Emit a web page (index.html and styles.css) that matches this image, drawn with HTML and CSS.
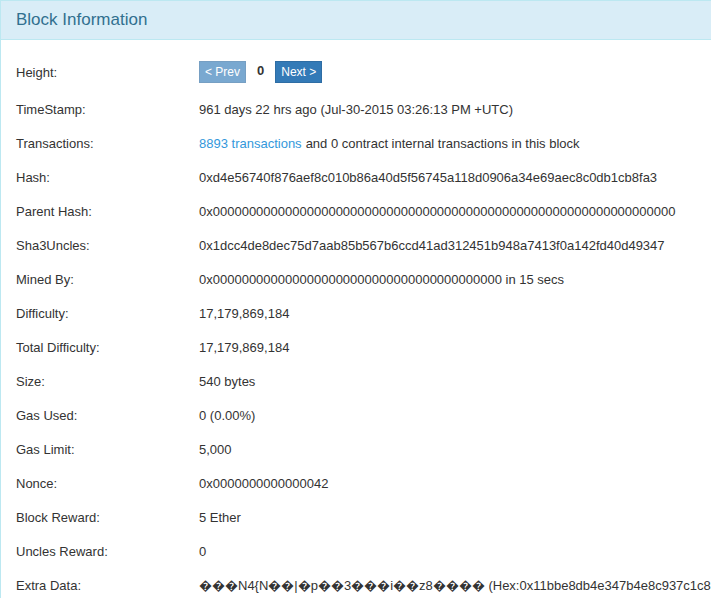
FILE: index.html
```html
<!DOCTYPE html>
<html>
<head>
<meta charset="utf-8">
<link rel="stylesheet" href="styles.css">
</head>
<body>
<div class="panel">
  <div class="panel-heading">
    <h3 class="panel-title">Block Information</h3>
  </div>
  <div class="panel-body">
    <div class="row row-first">
      <div class="label">Height:</div>
      <div class="value">
        <span class="btn btn-disabled">&lt; Prev</span>
        <b class="height-num">0</b>
        <span class="btn">Next &gt;</span>
      </div>
    </div>
    <div class="row"><div class="label">TimeStamp:</div><div class="value">961 days 22 hrs ago (Jul-30-2015 03:26:13 PM +UTC)</div></div>
    <div class="row"><div class="label">Transactions:</div><div class="value"><a class="link" href="#">8893 transactions</a> and 0 contract internal transactions in this block</div></div>
    <div class="row"><div class="label">Hash:</div><div class="value">0xd4e56740f876aef8c010b86a40d5f56745a118d0906a34e69aec8c0db1cb8fa3</div></div>
    <div class="row"><div class="label">Parent Hash:</div><div class="value">0x0000000000000000000000000000000000000000000000000000000000000000</div></div>
    <div class="row"><div class="label">Sha3Uncles:</div><div class="value">0x1dcc4de8dec75d7aab85b567b6ccd41ad312451b948a7413f0a142fd40d49347</div></div>
    <div class="row"><div class="label">Mined By:</div><div class="value">0x0000000000000000000000000000000000000000 in 15 secs</div></div>
    <div class="row"><div class="label">Difficulty:</div><div class="value">17,179,869,184</div></div>
    <div class="row"><div class="label">Total Difficulty:</div><div class="value">17,179,869,184</div></div>
    <div class="row"><div class="label">Size:</div><div class="value">540 bytes</div></div>
    <div class="row"><div class="label">Gas Used:</div><div class="value">0 (0.00%)</div></div>
    <div class="row"><div class="label">Gas Limit:</div><div class="value">5,000</div></div>
    <div class="row"><div class="label">Nonce:</div><div class="value">0x0000000000000042</div></div>
    <div class="row"><div class="label">Block Reward:</div><div class="value">5 Ether</div></div>
    <div class="row"><div class="label">Uncles Reward:</div><div class="value">0</div></div>
    <div class="row"><div class="label">Extra Data:</div><div class="value">&#xFFFD;&#xFFFD;&#xFFFD;N4{N&#xFFFD;&#xFFFD;|&#xFFFD;p&#xFFFD;&#xFFFD;3&#xFFFD;&#xFFFD;&#xFFFD;i&#xFFFD;&#xFFFD;z8&#xFFFD;&#xFFFD;&#xFFFD;&#xFFFD; (Hex:0x11bbe8db4e347b4e8c937c1c8370e4b5ed33adb3db69cbdb7a38e1e50b1b82fa)</div></div>
  </div>
</div>
</body>
</html>
```
FILE: styles.css
```css
html, body {
  margin: 0;
  padding: 0;
  background: #fff;
  overflow: hidden;
}
body {
  font-family: "Liberation Sans", Arial, Helvetica, sans-serif;
  font-size: 13px;
  color: #333;
}
.panel {
  border: 1px solid #bce8f1;
  border-right: none;
  width: 760px;
}
.panel-heading {
  background: #d9edf7;
  border-bottom: 1px solid #bce8f1;
  height: 38px;
  padding: 0 15px;
  display: flex;
  align-items: center;
}
.panel-title {
  margin: 0;
  font-size: 17px;
  font-weight: normal;
  color: #31708f;
}
.panel-body {
  padding: 12px 15px 0 15px;
}
.row {
  display: grid;
  grid-template-columns: 183px 1fr;
  height: 34px;
  align-items: center;
  white-space: nowrap;
}
.row-first {
  height: 40px;
}
.value {
  display: flex;
  align-items: center;
}
.btn {
  display: inline-block;
  background: #337ab7;
  border: 1px solid #2e6da4;
  color: #fff;
  font-size: 12px;
  line-height: 18px;
  padding: 1px 5px;
}
.btn-disabled {
  opacity: 0.65;
}
.height-num {
  margin: 0 11px 0 11px;
  font-size: 13px;
  position: relative;
  top: -2px;
}
.link {
  color: #3498db;
  text-decoration: none;
  margin-right: 4px;
}
```
